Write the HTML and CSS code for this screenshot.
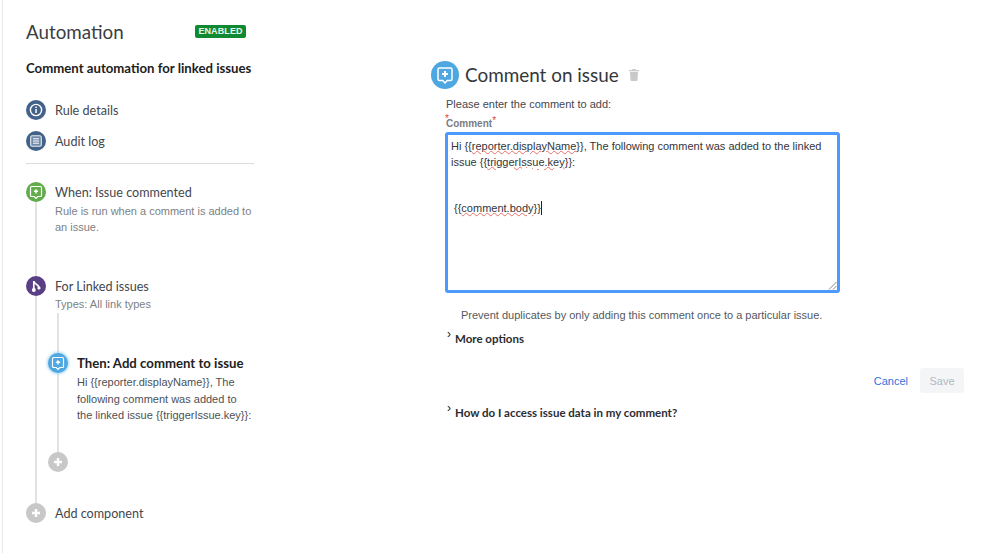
FILE: index.html
```html
<!DOCTYPE html>
<html lang="en">
<head>
<meta charset="utf-8">
<title>Comment automation for linked issues</title>
<link rel="stylesheet" href="styles.css">
</head>
<body>
<div class="page">
  <aside class="sidebar">
    <div class="top">
      <h1 class="app-title">Automation</h1>
      <span class="badge">ENABLED</span>
    </div>
    <h2 class="rule-name">Comment automation for linked issues</h2>
    <div class="nav">
      <div class="nav-row">
        <span class="dot dot-slate"><svg viewBox="0 0 20 20" width="20" height="20"><circle cx="10" cy="10" r="5.6" fill="none" stroke="#fff" stroke-width="1.4"/><rect x="9.3" y="9" width="1.5" height="4" fill="#fff"/><rect x="9.3" y="6.6" width="1.5" height="1.5" fill="#fff"/></svg></span>
        <span class="nav-text">Rule details</span>
      </div>
      <div class="nav-row">
        <span class="dot dot-slate"><svg viewBox="0 0 20 20" width="20" height="20"><rect x="4.700" y="4.700" width="10.600" height="10.600" rx="1.500" fill="#6f8aa9" stroke="#e6ecf2" stroke-width="1.100"/><path d="M7 7.800h6M7 10h6M7 12.200h6" stroke="#fff" stroke-width="1"/></svg></span>
        <span class="nav-text">Audit log</span>
      </div>
    </div>
    <hr class="divider">
    <div class="timeline">
      <div class="step step-when">
        <span class="dot dot-green"><svg viewBox="0 0 20 20" width="20" height="20"><path d="M5.500 4.500h9a1 1 0 0 1 1 1v8a1 1 0 0 1-1 1h-2.700L10 16.300 8.200 14.500H5.500a1 1 0 0 1-1-1v-8a1 1 0 0 1 1-1z" fill="none" stroke="#fff" stroke-width="1.200"/><path d="M10 7.200v4.200M7.900 9.300h4.200" stroke="#fff" stroke-width="1.400"/></svg></span>
        <div class="step-body">
          <div class="step-title">When: Issue commented</div>
          <p class="step-desc">Rule is run when a comment is added to an issue.</p>
        </div>
      </div>
      <div class="step step-for">
        <span class="dot dot-purple"><svg viewBox="0 0 20 20" width="20" height="20"><path d="M7.800 5v9" stroke="#fff" stroke-width="1.700"/><path d="M7.800 5.500c.5 2.500 4.500 2.800 5.200 5.800" fill="none" stroke="#fff" stroke-width="1.700"/><circle cx="7.800" cy="14" r="2" fill="#fff"/><circle cx="13" cy="12" r="1.600" fill="#fff"/></svg></span>
        <div class="step-body">
          <div class="step-title">For Linked issues</div>
          <p class="step-desc">Types: All link types</p>
        </div>
      </div>
      <div class="branch">
        <div class="step step-then">
          <span class="dot dot-blue dot-active"><svg viewBox="0 0 20 20" width="20" height="20"><path d="M5.500 4.500h9a1 1 0 0 1 1 1v8a1 1 0 0 1-1 1h-2.700L10 16.300 8.200 14.500H5.500a1 1 0 0 1-1-1v-8a1 1 0 0 1 1-1z" fill="none" stroke="#fff" stroke-width="1.200"/><path d="M10 7.200v4.200M7.900 9.300h4.200" stroke="#fff" stroke-width="1.400"/></svg></span>
          <div class="step-body">
            <div class="step-title step-title-bold">Then: Add comment to issue</div>
            <p class="step-text">Hi {{reporter.displayName}}, The following comment was added to the linked issue {{triggerIssue.key}}:</p>
          </div>
        </div>
        <div class="add-inner">
          <span class="dot dot-grey"><svg viewBox="0 0 20 20" width="20" height="20"><path d="M10 6v8M6 10h8" stroke="#fff" stroke-width="2.400"/></svg></span>
        </div>
      </div>
      <div class="step step-add">
        <span class="dot dot-grey"><svg viewBox="0 0 20 20" width="20" height="20"><path d="M10 6v8M6 10h8" stroke="#fff" stroke-width="2.400"/></svg></span>
        <span class="step-title">Add component</span>
      </div>
    </div>
  </aside>

  <main class="editor">
    <div class="editor-head">
      <span class="head-icon"><svg viewBox="0 0 28 28" width="28" height="28"><path d="M8.500 7h11a1.500 1.500 0 0 1 1.500 1.500v9.500a1.500 1.500 0 0 1-1.500 1.500h-3.200L14 22l-2.300-2.500H8.500A1.500 1.500 0 0 1 7 18V8.500A1.500 1.500 0 0 1 8.500 7z" fill="none" stroke="#fff" stroke-width="1.500"/><path d="M14 10v6M11 13h6" stroke="#fff" stroke-width="2"/></svg></span>
      <h2 class="editor-title">Comment on issue</h2>
      <svg class="trash" viewBox="0 0 10 12" width="10" height="12"><path d="M3.500 0h3l.5 1h3v1.300H0V1h3zM1 3h8l-.5 8a1 1 0 0 1-1 1h-5a1 1 0 0 1-1-1z" fill="#c9c9c9"/></svg>
    </div>
    <div class="form">
      <p class="hint">Please enter the comment to add:</p>
      <div class="label"><span class="star star-lead">*</span>Comment<span class="star">*</span></div>
      <div class="textbox">
        <div class="line">Hi {{<span class="sq">reporter.displayName</span>}}, The following comment was added to the linked</div>
        <div class="line">issue {{<span class="sq">triggerIssue.key</span>}}:</div>
        <div class="line line-gap"></div>
        <div class="line line-indent">{{<span class="sq">comment.body</span>}}<span class="caret"></span></div>
        <svg class="grip" viewBox="0 0 9 9" width="9" height="9"><path d="M8.500 1L1 8.500M8.500 5L5 8.500" stroke="#8a8a8a" stroke-width="1"/></svg>
      </div>
      <p class="prevent">Prevent duplicates by only adding this comment once to a particular issue.</p>
      <div class="toggle toggle-more"><span class="chev">›</span>More options</div>
      <div class="actions">
        <a class="cancel">Cancel</a>
        <button class="save" disabled>Save</button>
      </div>
      <div class="toggle toggle-help"><span class="chev">›</span>How do I access issue data in my comment?</div>
    </div>
  </main>
</div>
</body>
</html>
```
FILE: styles.css
```css
* { box-sizing: border-box; }
html, body { margin: 0; padding: 0; }
body {
  width: 999px;
  height: 553px;
  overflow: hidden;
  background: #fff;
  font-family: "Liberation Sans", Arial, sans-serif;
  color: #333;
}
h1, h2, p { margin: 0; font-weight: normal; }
.page {
  display: flex;
  height: 553px;
  margin-left: 2px;
  border-left: 1px solid #e8e8e8;
}
.sidebar {
  width: 251px;
  margin-left: 23px;
  flex: none;
  padding-top: 20px;
}
.top {
  display: flex;
  justify-content: space-between;
  width: 220px;
  height: 28px;
}
.app-title {
  font: 400 18.800px/24px Lato, sans-serif;
  color: #3a3d42;
}
.badge {
  width: 51px;
  height: 13px;
  margin-top: 5px;
  border-radius: 2px;
  background: #0f8a33;
  color: #e8f5ea;
  font: 700 9px/13px "Liberation Sans", sans-serif;
  letter-spacing: .1px;
  text-align: center;
}
.rule-name {
  margin-top: 12px;
  font: 700 13.200px/17px Lato, sans-serif;
  color: #1d1d1d;
  white-space: nowrap;
}
.nav { margin-top: 23px; display: flex; flex-direction: column; gap: 11px; }
.nav-row { display: flex; align-items: center; height: 20px; gap: 9px; }
.nav-text, .step-title {
  font: 400 12.600px/20px Lato, sans-serif;
  color: #44474d;
  white-space: nowrap;
}
.nav-text { margin-top: 2px; }
.step-title { margin-top: 1px; }
.dot {
  flex: none;
  width: 20px;
  height: 20px;
  border-radius: 50%;
  display: block;
  position: relative;
  z-index: 1;
}
.dot svg { display: block; }
.dot-slate { background: #42628a; }
.dot-green { background: #63ac4b; }
.dot-purple { background: #5b3f86; }
.dot-blue { background: #4ea7e0; }
.dot-grey { background: #c8c8c8; }
.dot-active { box-shadow: 0 0 3px 1px #a9d7f5; }
.divider { border: 0; border-top: 1px solid #dcdcdc; margin: 12px 0 0; width: 228px; }
.timeline {
  position: relative;
  margin-top: 18px;
}
.timeline::before {
  content: "";
  position: absolute;
  left: 9px;
  top: 10px;
  width: 2px;
  height: 312px;
  background: #e2e2e2;
}
.step { display: flex; gap: 9px; position: relative; }
.step-body { min-width: 0; flex: 1; }
.step-desc {
  font-size: 11px;
  line-height: 15.500px;
  color: #7d7f84;
  margin-top: 1px;
  width: 200px;
}
.step-when { height: 94px; }
.step-for { height: 77px; }
.step-for .step-desc { margin-top: 0; }
.branch {
  position: relative;
  margin-left: 22px;
}
.branch::before {
  content: "";
  position: absolute;
  left: 9px;
  top: -40px;
  width: 2px;
  height: 140px;
  background: #e2e2e2;
}
.step-then { height: 99px; }
.step-title-bold {
  margin-top: 0;
  font-weight: 700;
  color: #222;
  font-size: 13.200px;
  line-height: 20px;
}
.step-text {
  font-size: 11px;
  line-height: 16.500px;
  color: #4d5056;
  width: 175px;
  margin-top: 1px;
  white-space: normal;
}
.add-inner { height: 51px; }
.step-add { align-items: center; height: 20px; }
.step-add .step-title { margin-top: 2px; }
.editor {
  flex: none;
  width: 536px;
  margin-left: 168px;
  padding-top: 61px;
}
.editor-head { display: flex; align-items: center; height: 28px; gap: 6px; margin-left: -14px; width: 260px; }
.head-icon {
  flex: none;
  width: 28px;
  height: 28px;
  border-radius: 50%;
  background: #4ea7e0;
}
.head-icon svg { display: block; }
.editor-title {
  font: 400 18.900px/28px Lato, sans-serif;
  color: #34373c;
  white-space: nowrap;
}
.trash { margin-left: 4px; flex: none; }
.form { padding-top: 8px; }
.hint { padding-left: 1px; font-size: 11px; line-height: 14px; color: #44474d; }
.label {
  margin-top: 6px;
  padding-left: 1px;
  font-size: 10px;
  line-height: 13px;
  font-weight: 700;
  color: #7a7d85;
  position: relative;
  height: 13px;
}
.star { color: #d9443a; font-size: 10px; font-weight: 400; position: relative; top: -3px; }
.star-lead { position: absolute; left: 0; top: -5px; }
.textbox {
  position: relative;
  width: 395px;
  height: 161px;
  margin-top: 2px;
  border: 3px solid #4c9aff;
  border-radius: 3px;
  padding: 4px 3px;
  font-size: 11px;
  line-height: 15.600px;
  color: #33363b;
}
.line { min-height: 15.600px; white-space: nowrap; }
.line-gap { height: 31.200px; }
.line-indent { padding-left: 3px; }
.sq { text-decoration: underline wavy #ea6f66 1px; text-underline-offset: 0; }
.caret { display: inline-block; width: 1px; height: 14px; background: #222; vertical-align: -3px; }
.grip { position: absolute; right: 0; bottom: 0; }
.prevent {
  margin: 15px 0 0 16px;
  font-size: 11px;
  line-height: 14px;
  color: #55585e;
  white-space: nowrap;
}
.toggle {
  position: relative;
  padding-left: 10px;
  font: 700 11.500px/16px Lato, sans-serif;
  color: #2b2d31;
  white-space: nowrap;
}
.chev {
  position: absolute;
  left: 2px;
  top: -5px;
  font: 400 12px/16px "Liberation Sans", sans-serif;
  color: #222;
}
.toggle-more { margin-top: 9px; }
.actions {
  display: flex;
  justify-content: flex-end;
  align-items: center;
  gap: 12px;
  margin-top: 21px;
  width: 519px;
  height: 25px;
}
.cancel { font-size: 11px; color: #2f75dc; }
.save {
  width: 44px;
  height: 25px;
  padding: 0;
  border: 0;
  border-radius: 3px;
  background: #f4f5f7;
  color: #b3b7bf;
  font: 400 11px "Liberation Sans", sans-serif;
}
.toggle-help { margin-top: 12px; }
```
